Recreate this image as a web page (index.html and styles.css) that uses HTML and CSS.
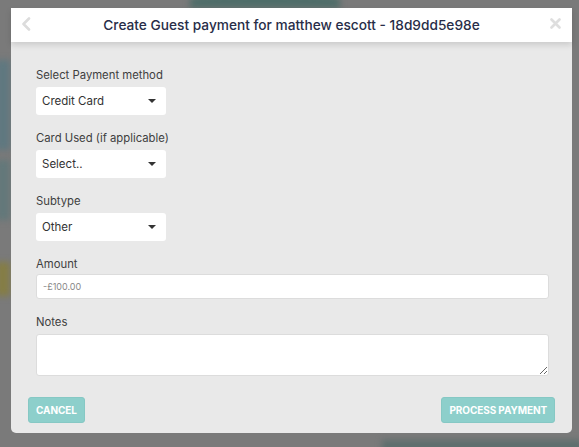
FILE: index.html
```html
<!DOCTYPE html>
<html>
<head>
<meta charset="utf-8">
<link rel="stylesheet" href="styles.css">
</head>
<body>
<div class="backdrop">
  <div class="blob blob-top"></div>
  <div class="blob blob-left1"></div>
  <div class="blob blob-left2"></div>
  <div class="blob blob-left3"></div>
  <div class="blob blob-bottom"></div>
  <div class="modal">
    <div class="modal-header">
      <span class="hdr-icon back">
        <svg width="10" height="14" viewBox="0 0 10 14"><path d="M8 1.5 L2.5 7 L8 12.5" fill="none" stroke="#dcdcdc" stroke-width="2.6" stroke-linecap="round" stroke-linejoin="round"/></svg>
      </span>
      <h1 class="title">Create Guest payment for matthew escott - 18d9dd5e98e</h1>
      <span class="hdr-icon close">
        <svg width="11" height="11" viewBox="0 0 11 11"><path d="M1.5 1.5 L9.5 9.5 M9.5 1.5 L1.5 9.5" fill="none" stroke="#dedede" stroke-width="2.6" stroke-linecap="round"/></svg>
      </span>
    </div>
    <div class="modal-body">
      <div class="field">
        <label class="lbl">Select Payment method</label>
        <div class="select"><span>Credit Card</span><i class="caret"></i></div>
      </div>
      <div class="field">
        <label class="lbl">Card Used (if applicable)</label>
        <div class="select"><span>Select..</span><i class="caret"></i></div>
      </div>
      <div class="field">
        <label class="lbl">Subtype</label>
        <div class="select"><span>Other</span><i class="caret"></i></div>
      </div>
      <div class="field field-tight">
        <label class="lbl">Amount</label>
        <input class="input" type="text" placeholder="-£100.00">
      </div>
      <div class="field">
        <label class="lbl">Notes</label>
        <textarea class="textarea"></textarea>
      </div>
    </div>
    <div class="modal-footer">
      <button class="btn">CANCEL</button>
      <button class="btn">PROCESS PAYMENT</button>
    </div>
  </div>
</div>
</body>
</html>
```
FILE: styles.css
```css
* { box-sizing: border-box; }
html, body { margin: 0; padding: 0; }
body {
  width: 579px;
  height: 447px;
  overflow: hidden;
  background: #7a7a7a;
  font-family: Inter, "Noto Sans", sans-serif;
}
.backdrop {
  position: relative;
  width: 579px;
  height: 447px;
  padding: 8px 7px 0 11px;
  overflow: hidden;
}
.blob { position: absolute; filter: blur(3px); }
.blob-top { left: 190px; top: -6px; width: 150px; height: 14px; background: #4e6d69; border-radius: 40% 40% 0 0; }
.blob-left1 { left: -4px; top: 60px; width: 14px; height: 90px; background: #5f7880; }
.blob-left2 { left: -4px; top: 160px; width: 14px; height: 60px; background: #63787a; }
.blob-left3 { left: -4px; top: 262px; width: 14px; height: 34px; background: #857d45; }
.blob-bottom { left: 382px; top: 440px; width: 200px; height: 12px; background: #5d6e6d; }
.modal {
  position: relative;
  width: 561px;
  height: 425px;
  background: #e9e9e9;
  border-radius: 0 0 5px 5px;
  display: flex;
  flex-direction: column;
}
.modal-header {
  height: 34px;
  background: #fff;
  display: flex;
  align-items: center;
  justify-content: space-between;
  padding: 0 10px 0 10px;
  box-shadow: 0 3px 6px rgba(0,0,0,0.13);
  position: relative;
  z-index: 1;
}
.hdr-icon { display: flex; align-items: center; width: 12px; }
.hdr-icon.back { margin-top: -2px; }
.hdr-icon.close { margin-top: -4px; }
.title {
  margin: 0;
  font-size: 13.7px;
  font-weight: 500;
  color: #282d48;
  letter-spacing: 0;
  margin-top: -1px;
}
.modal-body {
  padding: 26px 24px 0 25px;
  display: flex;
  flex-direction: column;
  gap: 16px;
}
.field { display: flex; flex-direction: column; gap: 5px; }
.field-tight { gap: 3px; }
.lbl {
  font-size: 11.3px;
  color: #404040;
  line-height: 14px;
}
.select {
  width: 130px;
  height: 28px;
  background: #fff;
  border-radius: 3px;
  display: flex;
  align-items: center;
  justify-content: space-between;
  padding: 0 10px 0 6px;
  font-size: 11.5px;
  color: #333;
}
.caret {
  width: 0; height: 0;
  border-left: 4px solid transparent;
  border-right: 4px solid transparent;
  border-top: 4px solid #333;
}
.input {
  width: 513px;
  height: 25px;
  border: 1px solid #dcdcdc;
  border-radius: 3px;
  background: #fff;
  padding: 0 6px;
  font-family: inherit;
  font-size: 9px;
  color: #333;
  outline: none;
}
.input::placeholder { color: #888; }
.textarea {
  width: 513px;
  height: 42px;
  border: 1px solid #dcdcdc;
  border-radius: 3px;
  background: #fff;
  font-family: inherit;
  outline: none;
  display: block;
  margin: 0;
}
.modal-footer {
  margin-top: auto;
  padding: 0 17px 10px 17px;
  display: flex;
  justify-content: space-between;
}
.btn {
  height: 26px;
  background: #8dcfcb;
  border: 1px solid #86c8c4;
  border-radius: 3px;
  color: #fff;
  font-family: inherit;
  font-weight: 700;
  font-size: 10px;
  letter-spacing: -0.1px;
  padding: 0 7px;
}
```
